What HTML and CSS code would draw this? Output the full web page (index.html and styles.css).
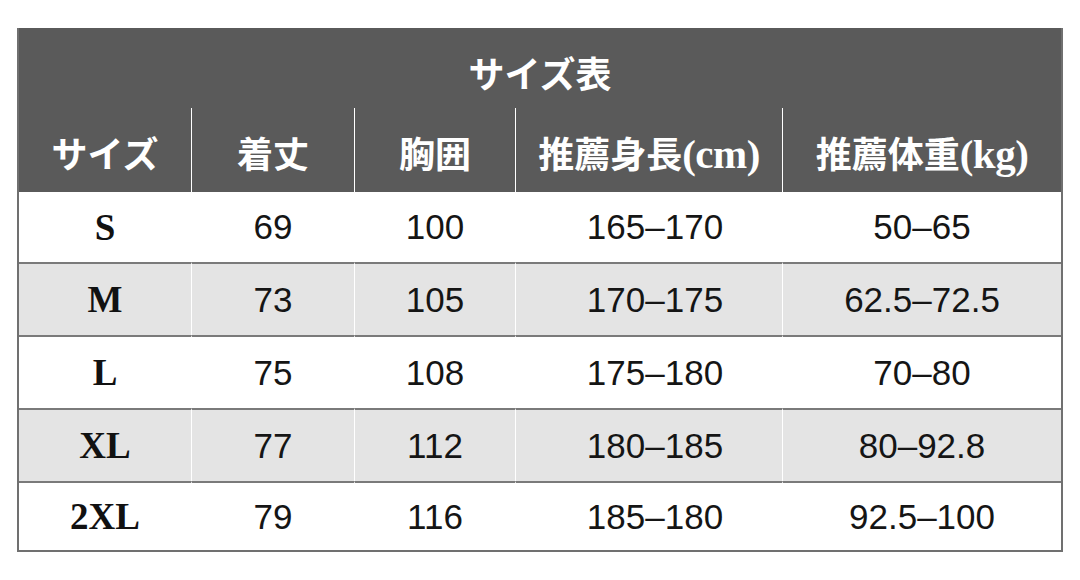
FILE: index.html
```html
<!DOCTYPE html>
<html lang="ja">
<head>
<meta charset="utf-8">
<link rel="stylesheet" href="styles.css">
<title>サイズ表</title>
</head>
<body>
<div class="wrap">
<table class="size-table">
  <colgroup>
    <col class="c1"><col class="c2"><col class="c3"><col class="c4"><col class="c5">
  </colgroup>
  <thead>
    <tr class="title-row"><th colspan="5">サイズ表</th></tr>
    <tr class="head-row">
      <th>サイズ</th><th>着丈</th><th>胸囲</th><th>推薦身長<span class="unit">(cm)</span></th><th>推薦体重<span class="unit">(kg)</span></th>
    </tr>
  </thead>
  <tbody>
    <tr class="r-first"><td class="sz">S</td><td>69</td><td>100</td><td class="h">165–170</td><td>50–65</td></tr>
    <tr class="alt"><td class="sz">M</td><td>73</td><td>105</td><td class="h">170–175</td><td>62.5–72.5</td></tr>
    <tr><td class="sz">L</td><td>75</td><td>108</td><td class="h">175–180</td><td>70–80</td></tr>
    <tr class="alt"><td class="sz">XL</td><td>77</td><td>112</td><td class="h">180–185</td><td>80–92.8</td></tr>
    <tr class="r-last"><td class="sz">2XL</td><td>79</td><td>116</td><td class="h">185–180</td><td>92.5–100</td></tr>
  </tbody>
</table>
</div>
</body>
</html>
```
FILE: styles.css
```css
html, body {
  margin: 0;
  padding: 0;
  background: #ffffff;
}
.wrap {
  padding: 28px 0 0 17px;
}
.size-table {
  width: 1046px;
  table-layout: fixed;
  border-collapse: separate;
  border-spacing: 0;
  border-left: 2px solid #707070;
  border-right: 2px solid #707070;
  border-bottom: 2px solid #707070;
}
.c1 { width: 172px; }
.c2 { width: 163px; }
.c3 { width: 161px; }
.c4 { width: 267px; }
.c5 { width: 279px; }

.size-table th {
  background: #5a5a5a;
  color: #ffffff;
  font-family: "Liberation Serif", "Noto Sans CJK JP", serif;
  font-weight: 700;
  font-size: 36px;
  padding: 0;
  text-align: center;
  white-space: nowrap;
}
.title-row th {
  height: 80px;
  padding-top: 8px;
  box-sizing: border-box;
}
.head-row th {
  height: 84px;
  padding-top: 4px;
  box-sizing: border-box;
}
.head-row th + th {
  border-left: 1px solid #ffffff;
}
.unit {
  font-size: 41px;
  letter-spacing: -0.5px;
}
.size-table td {
  height: 71px;
  padding: 0;
  text-align: center;
  font-family: "Liberation Sans", Arial, sans-serif;
  font-size: 35px;
  color: #151515;
  border-top: 2px solid #7a7a7a;
  background: #ffffff;
}
.size-table tr.r-first td {
  border-top: none;
  height: 70px;
}
.size-table tr.r-last td {
  height: 67px;
}
.size-table td + td {
  border-left: 1px solid #ffffff;
}
.size-table tr.alt td {
  background: #e4e4e4;
}
.size-table td.sz {
  font-family: "Liberation Serif", "Times New Roman", serif;
  font-weight: 700;
  font-size: 37px;
  color: #111111;
}
.size-table td.h {
  padding-left: 12px;
}
```
